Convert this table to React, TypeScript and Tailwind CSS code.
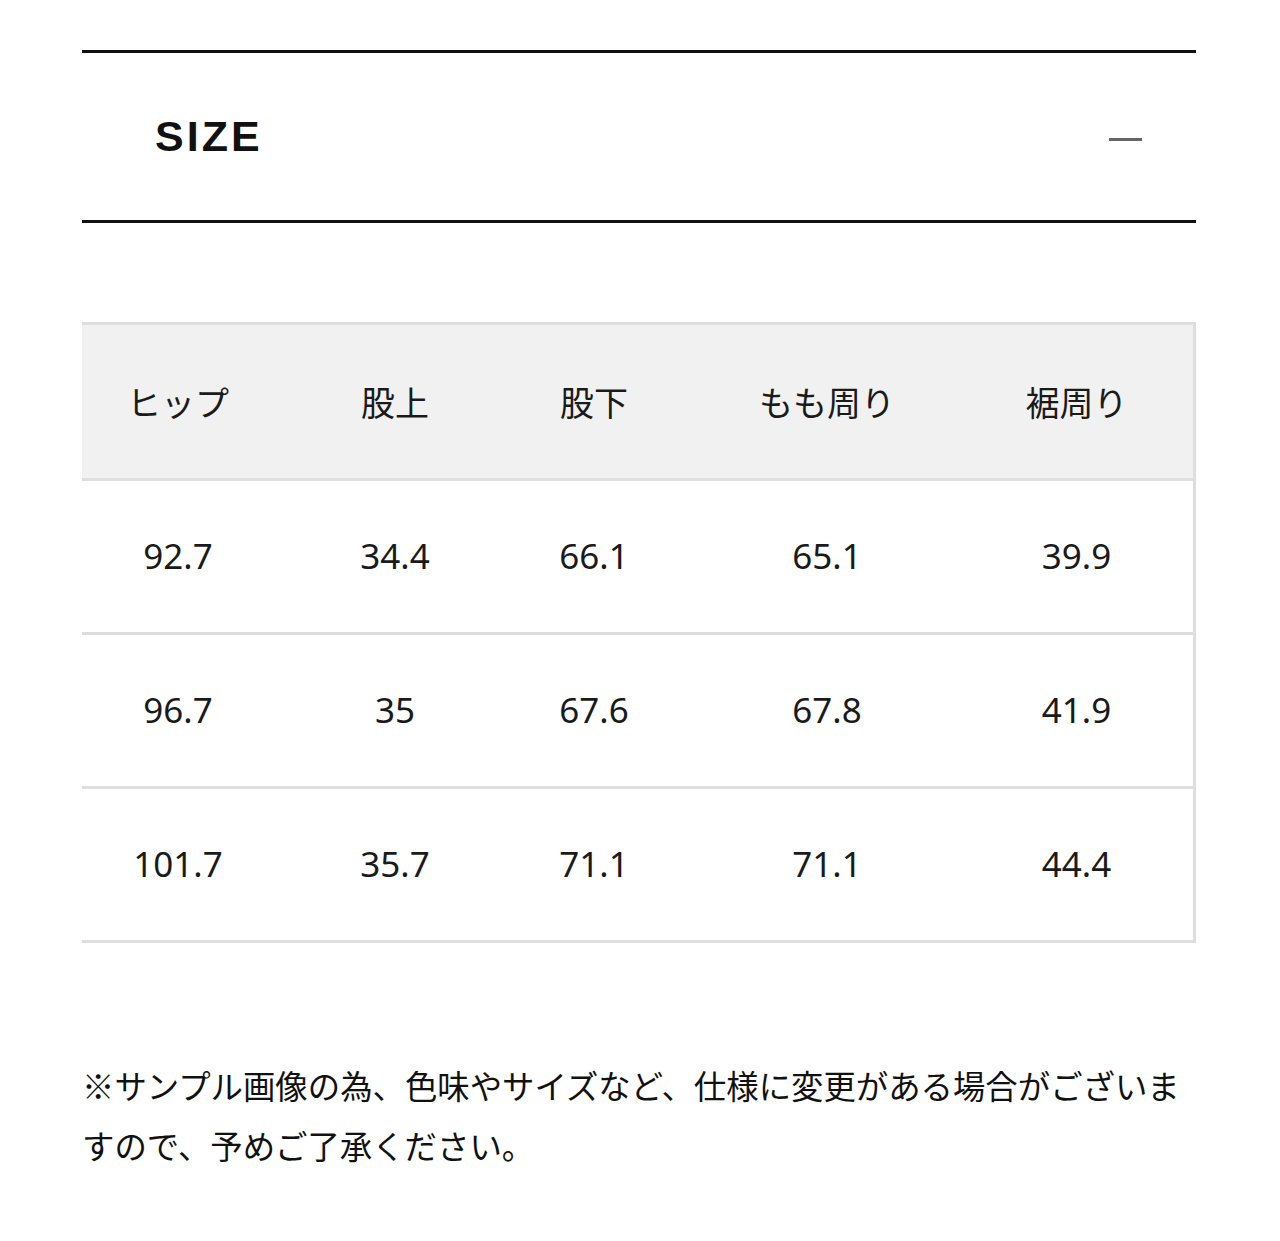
const headers = ["ヒップ", "股上", "股下", "もも周り", "裾周り"]

const rows = [
  ["92.7", "34.4", "66.1", "65.1", "39.9"],
  ["96.7", "35", "67.6", "67.8", "41.9"],
  ["101.7", "35.7", "71.1", "71.1", "44.4"],
]

const cols = "grid grid-cols-[192px_242px_156px_310px_1fr]"

export default function App() {
  return (
    <div
      className="min-h-[1241px] bg-white text-[#1a1a1a]"
      style={{ fontFamily: '"Noto Sans", "Noto Sans CJK JP", sans-serif' }}
    >
      <div className="ml-[82px] w-[1114px] pt-[50px]">
        {/* Accordion header */}
        <div className="flex h-[173px] items-center justify-between border-y-[3px] border-[#111]">
          <h2
            className="pl-[73px] text-[43px] font-bold leading-none tracking-[3px] text-[#111]"
            style={{ fontFamily: '"Liberation Sans", sans-serif' }}
          >
            SIZE
          </h2>
          <span className="mr-[54px] mt-[5px] h-[3px] w-[33px] bg-[#666]" />
        </div>

        {/* Size table */}
        <div className="mt-[99px] border-t-[3px] border-r-[3px] border-[#dedede]">
          <div
            className={`${cols} h-[153px] items-center bg-[#f1f1f1] text-[34px]`}
            style={{ fontFamily: '"Noto Sans CJK JP", sans-serif' }}
          >
            {headers.map((h, i) => (
              <div key={h} className={i === 4 ? "pr-[22px] text-center" : "text-center"}>
                {h}
              </div>
            ))}
          </div>
          {rows.map((row, r) => (
            <div
              key={r}
              className={`${cols} h-[154px] items-center border-t-[3px] border-[#dedede] text-[35px]`}
            >
              {row.map((v, i) => (
                <div key={i} className={i === 4 ? "pr-[22px] text-center" : "text-center"}>
                  {v}
                </div>
              ))}
            </div>
          ))}
          <div className="h-[3px] bg-[#dedede] -mr-[3px]" />
        </div>

        {/* Note */}
        <p
          className="mt-[112px] text-[32.4px] leading-[60px] text-[#111]"
          style={{ fontFamily: '"Noto Sans CJK JP", sans-serif' }}
        >
          ※サンプル画像の為、色味やサイズなど、仕様に変更がある場合がございますので、予めご了承ください。
        </p>
      </div>
    </div>
  )
}
